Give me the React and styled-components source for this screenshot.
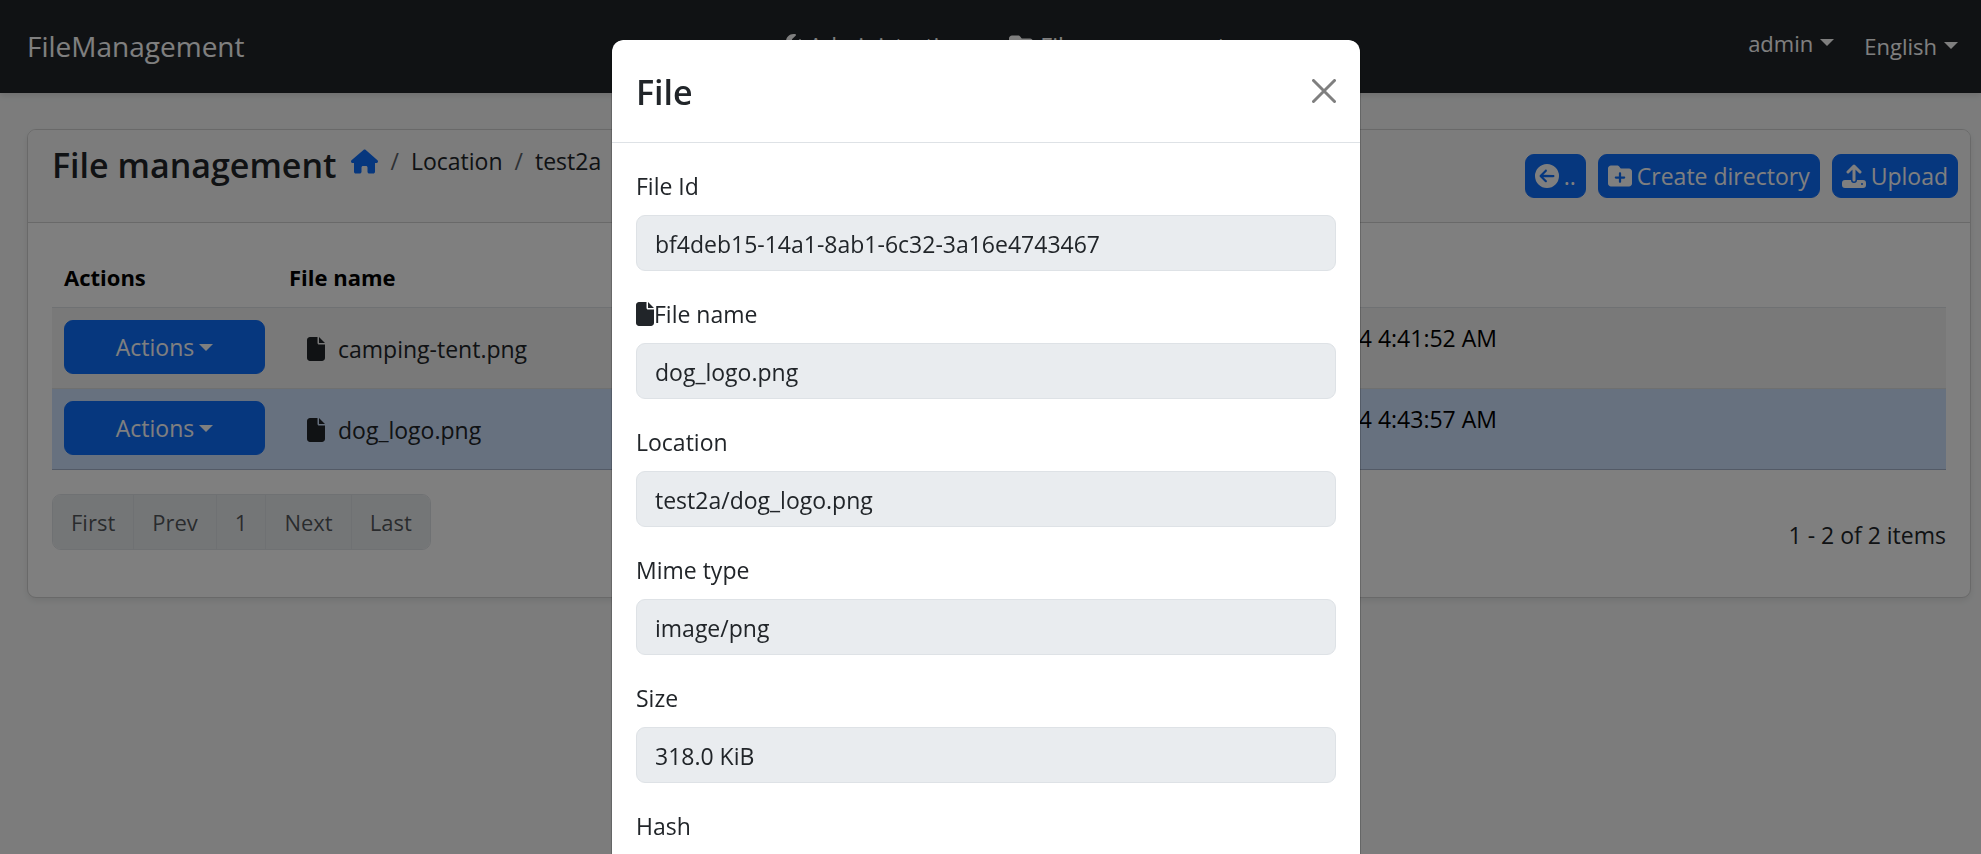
import React from "react";
import styled, { createGlobalStyle, css } from "styled-components";
import {
  FaCircleArrowLeft,
  FaFile,
  FaFolder,
  FaFolderPlus,
  FaHouse,
  FaWrench,
} from "react-icons/fa6";

const GlobalStyle = createGlobalStyle`
  *, *::before, *::after { box-sizing: border-box; }
  html { overflow: hidden; }
  body {
    margin: 0;
    background: #f8f9f9;
    color: #212529;
    font-family: "Open Sans", "Noto Sans", sans-serif;
    font-size: 23px;
    line-height: 36px;
  }
  button, input { font: inherit; }
`;

const Caret = styled.span`
  width: 0;
  height: 0;
  border-top: 7px solid currentColor;
  border-left: 7px solid transparent;
  border-right: 7px solid transparent;
`;

const Navbar = styled.nav`
  display: grid;
  grid-template-columns: 1fr auto 1fr;
  align-items: center;
  height: 93px;
  padding: 0 23px 2px 27px;
  background: #212529;
  color: #fff;
  box-shadow: 0 3px 6px rgba(0, 0, 0, 0.1);
`;

const Brand = styled.a`
  color: inherit;
  font-size: 28px;
  text-decoration: none;
`;

const NavMenu = styled.div`
  display: flex;
  gap: 21px;
  padding-left: 18px;
`;

const NavEnd = styled.div`
  display: flex;
  justify-content: flex-end;
  gap: 30px;
  font-size: 22px;
`;

const NavButton = styled.button`
  display: flex;
  align-items: center;
  gap: 7px;
  padding: 0;
  border: 0;
  background: none;
  color: inherit;
  ${(p) => p.$raised && css`padding-bottom: 6px;`}
`;

const Main = styled.main`
  padding: 36px 10px 36px 27px;
`;

const Card = styled.section`
  border: 1px solid #d3d3d3;
  border-radius: 9px;
  background: #fff;
  box-shadow: 0 3px 6px rgba(0, 0, 0, 0.08);
`;

const CardHeader = styled.header`
  display: flex;
  justify-content: space-between;
  align-items: flex-start;
  min-height: 93px;
  padding: 12px 12px 12px 24px;
  border-bottom: 1px solid #d3d3d3;
  border-radius: 8px 8px 0 0;
  background: #f8f8f8;
`;

const TitleGroup = styled.div`
  display: flex;
  gap: 15px;
`;

const Title = styled.h1`
  margin: 0;
  font-size: 34px;
  font-weight: 600;
  line-height: 46px;
`;

const Breadcrumb = styled.ol`
  display: flex;
  align-items: center;
  gap: 12px;
  height: 38px;
  margin: 0;
  padding: 0;
  list-style: none;
`;

const Crumb = styled.li`
  display: flex;
  gap: 12px;

  & + &::before {
    content: "/";
    color: #5c636a;
  }

  a {
    display: flex;
    color: #0d6efd;
  }
`;

const Toolbar = styled.div`
  display: flex;
  gap: 12px;
  padding-top: 12px;
`;

const Button = styled.button`
  display: flex;
  align-items: center;
  justify-content: center;
  gap: 5px;
  height: 44px;
  padding: 0 9px;
  border: 1px solid #0d6efd;
  border-radius: 9px;
  background: #0d6efd;
  color: #fff;
  ${(p) => p.$wide && css`width: 201px; height: 54px;`}
`;

const CardBody = styled.div`
  padding: 24px;
`;

const Table = styled.table`
  width: 100%;
  border-collapse: separate;
  border-spacing: 0;
  table-layout: fixed;
  color: #000;

  th, td {
    padding: 12px;
    border-bottom: 1px solid #dee2e6;
    text-align: left;
    vertical-align: top;
  }

  th {
    font-size: 22px;
    font-weight: 700;
  }
`;

const ActionsCol = styled.col`
  width: 225px;
`;

const NameCol = styled.col`
  width: 30%;
`;

const DateCol = styled.col`
  width: 36%;
`;

const Row = styled.tr`
  height: 81px;
  background: ${(p) => (p.$active ? "#cfe2ff" : "#f2f2f2")};

  && td {
    border-color: ${(p) => (p.$active ? "#a6b5cc" : "#dfe0e1")};
  }
`;

const FileLabel = styled.span`
  display: flex;
  align-items: center;
  gap: 13px;
  padding: 10px 0 0 18px;
  height: 48px;
  color: #212529;
`;

const CardFooter = styled.div`
  display: flex;
  justify-content: space-between;
  align-items: flex-start;
  padding: 24px 0 20px;
`;

const Pager = styled.div`
  display: flex;
  border: 1px solid #dee2e6;
  border-radius: 9px;
  overflow: hidden;
`;

const PageButton = styled.button`
  height: 54px;
  padding: 0 18px;
  border: 0;
  background: #e9ecef;
  color: rgba(33, 37, 41, 0.75);
  font-size: 22px;

  & + & {
    border-left: 1px solid #dee2e6;
  }
`;

const Count = styled.span`
  padding-top: 23px;
`;

const Backdrop = styled.div`
  position: fixed;
  inset: 0;
  padding: 40px 9px 0 0;
  overflow: hidden;
  background: rgba(0, 0, 0, 0.5);
`;

const Dialog = styled.div`
  width: 750px;
  max-width: 100%;
  margin: 0 auto;
  border: 1px solid rgba(0, 0, 0, 0.18);
  border-top: 0;
  border-radius: 12px;
  background: #fff;
  background-clip: padding-box;
`;

const DialogHeader = styled.header`
  display: flex;
  justify-content: space-between;
  align-items: center;
  height: 103px;
  padding: 2px 24px 0;
  border-bottom: 1px solid #dee2e6;
`;

const CloseButton = styled.button`
  display: flex;
  padding: 0 0 2px;
  border: 0;
  background: none;
  color: #7f7f7f;
`;

const DialogBody = styled.div`
  display: flex;
  flex-direction: column;
  gap: 24px;
  padding: 24px;
`;

const Field = styled.div`
  display: flex;
  flex-direction: column;
  gap: 12px;

  label {
    display: flex;
    align-items: center;
    height: 36px;
    padding-top: 2px;
  }

  input {
    width: 100%;
    height: 56px;
    padding: 2px 18px 0;
    border: 1px solid #dee2e6;
    border-radius: 9px;
    background: #e9ecef;
    color: #212529;
  }
`;

const FileIcon = styled(FaFile)`
  width: 18px;
  height: 24px;
`;

const UploadIcon = () => (
  <svg width="24" height="24" viewBox="0 0 24 24" fill="none">
    <path
      d="M12 16V3M6 8l6-6 6 6"
      stroke="currentColor"
      strokeWidth="3"
      strokeLinecap="round"
      strokeLinejoin="round"
    />
    <path
      fill="currentColor"
      fillRule="evenodd"
      d="M3 16h6a3 3 0 0 0 6 0h6a3 3 0 0 1 3 3v2a3 3 0 0 1-3 3H3a3 3 0 0 1-3-3v-2a3 3 0 0 1 3-3Zm17 3a1 1 0 1 0 0 2 1 1 0 0 0 0-2Z"
    />
  </svg>
);

const CloseIcon = () => (
  <svg width="24" height="24" viewBox="0 0 24 24" fill="none">
    <path d="M1.5 1.5l21 21M22.5 1.5l-21 21" stroke="currentColor" strokeWidth="3" strokeLinecap="round" />
  </svg>
);

const files = [
  { name: "camping-tent.png", size: "29.8 KiB", created: "2/8/2024 4:41:52 AM" },
  { name: "dog_logo.png", size: "318.0 KiB", created: "2/8/2024 4:43:57 AM", active: true },
];

const fields = [
  { id: "file-id", label: "File Id", value: "bf4deb15-14a1-8ab1-6c32-3a16e4743467" },
  { id: "file-name", label: "File name", value: "dog_logo.png", icon: true },
  { id: "location", label: "Location", value: "test2a/dog_logo.png" },
  { id: "mime-type", label: "Mime type", value: "image/png" },
  { id: "size", label: "Size", value: "318.0 KiB" },
  { id: "hash", label: "Hash", value: "" },
];

export default function App() {
  return (
    <>
      <GlobalStyle />
      <Navbar>
        <Brand href="#">FileManagement</Brand>
        <NavMenu>
          <NavButton><FaWrench size={24} />Administration<Caret /></NavButton>
          <NavButton><FaFolder size={24} />File management</NavButton>
        </NavMenu>
        <NavEnd>
          <NavButton $raised>admin<Caret /></NavButton>
          <NavButton>English<Caret /></NavButton>
        </NavEnd>
      </Navbar>

      <Main>
        <Card>
          <CardHeader>
            <TitleGroup>
              <Title>File management</Title>
              <Breadcrumb>
                <Crumb><a href="#" aria-label="Home"><FaHouse size={27} /></a></Crumb>
                <Crumb>Location</Crumb>
                <Crumb>test2a</Crumb>
              </Breadcrumb>
            </TitleGroup>
            <Toolbar>
              <Button><FaCircleArrowLeft size={24} />..</Button>
              <Button><FaFolderPlus size={24} />Create directory</Button>
              <Button><UploadIcon />Upload</Button>
            </Toolbar>
          </CardHeader>
          <CardBody>
            <Table>
              <colgroup>
                <ActionsCol />
                <NameCol />
                <col />
                <DateCol />
              </colgroup>
              <thead>
                <tr>
                  <th>Actions</th>
                  <th>File name</th>
                  <th>Size</th>
                  <th></th>
                </tr>
              </thead>
              <tbody>
                {files.map((file) => (
                  <Row key={file.name} $active={file.active}>
                    <td><Button $wide>Actions<Caret /></Button></td>
                    <td><FileLabel><FileIcon />{file.name}</FileLabel></td>
                    <td>{file.size}</td>
                    <td>{file.created}</td>
                  </Row>
                ))}
              </tbody>
            </Table>
            <CardFooter>
              <Pager>
                {["First", "Prev", "1", "Next", "Last"].map((page) => (
                  <PageButton key={page} disabled>{page}</PageButton>
                ))}
              </Pager>
              <Count>1 - 2 of 2 items</Count>
            </CardFooter>
          </CardBody>
        </Card>
      </Main>

      <Backdrop>
        <Dialog role="dialog" aria-modal="true" aria-labelledby="dialog-title">
          <DialogHeader>
            <Title as="h2" id="dialog-title">File</Title>
            <CloseButton aria-label="Close"><CloseIcon /></CloseButton>
          </DialogHeader>
          <DialogBody>
            {fields.map((field) => (
              <Field key={field.id}>
                <label htmlFor={field.id}>{field.icon && <FileIcon />}{field.label}</label>
                <input id={field.id} defaultValue={field.value} readOnly />
              </Field>
            ))}
          </DialogBody>
        </Dialog>
      </Backdrop>
    </>
  );
}
